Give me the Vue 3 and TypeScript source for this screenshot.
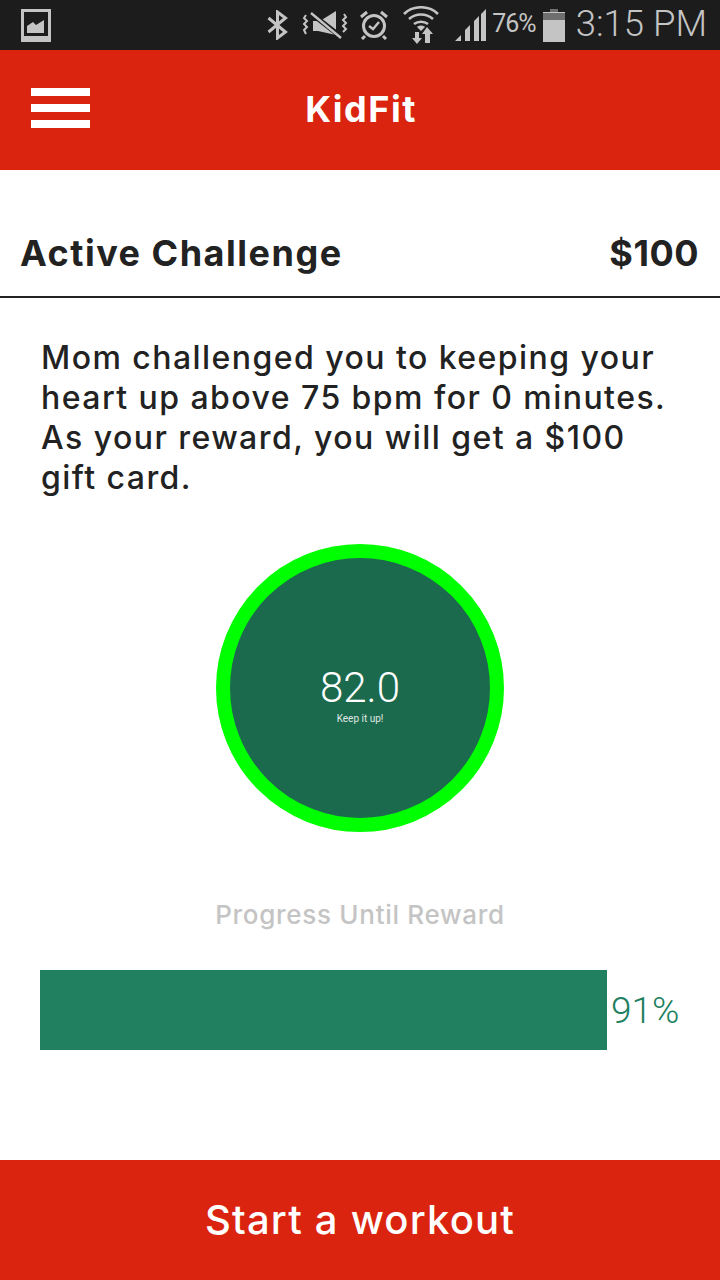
<template>
  <div class="screen">
    <div class="status-bar">
      <svg class="pic-icon" width="30" height="33" viewBox="0 0 30 33">
        <path fill="#c4c4c4" fill-rule="evenodd" d="M0 0h30v33H0z M3 3v24h24V3z" />
        <path fill="#c4c4c4" d="M6 24v-7l6-4 3 3 8-5v13z" />
      </svg>
      <div class="status-right">
        <svg class="st bt" width="21" height="30" viewBox="0 0 21 30">
          <path fill="none" stroke="#c4c4c4" stroke-width="3" d="M1.5 8l17 14-8 6V2l8 6-17 14" />
        </svg>
        <svg class="st mute" width="46" height="30" viewBox="0 0 46 30">
          <path fill="none" stroke="#c4c4c4" stroke-width="2" d="M4 5l-2 3 3 3-3 3 3 3-3 3 2 4" />
          <path fill="none" stroke="#c4c4c4" stroke-width="2" d="M42 4l2 3-3 3 3 3-3 3 3 3-3 3" />
          <path fill="#c4c4c4" d="M11 11h7L34 1v24l-18-4h-5z" />
          <path fill="none" stroke="#1c1c1c" stroke-width="5" d="M6 1l32 25" />
          <path fill="none" stroke="#c4c4c4" stroke-width="2.4" d="M9 3l30 25" />
        </svg>
        <svg class="st alarm" width="30" height="30" viewBox="0 0 30 30">
          <circle cx="15" cy="16" r="10.5" fill="none" stroke="#c4c4c4" stroke-width="3" />
          <path fill="none" stroke="#c4c4c4" stroke-width="2.4" d="M10 16l4 3 6-7" />
          <path fill="none" stroke="#c4c4c4" stroke-width="3" d="M2 7l6-5M28 7l-6-5M6 26l-3 3M24 26l3 3" />
        </svg>
        <svg class="st wifi" width="36" height="38" viewBox="0 0 36 38">
          <path fill="none" stroke="#c4c4c4" stroke-width="2.6" d="M1 8C10-1 26-1 35 8" />
          <path fill="none" stroke="#c4c4c4" stroke-width="2.6" d="M6 13c7-6 17-6 24 0" />
          <path fill="none" stroke="#c4c4c4" stroke-width="2.6" d="M11 18c4-3 10-3 14 0" />
          <path fill="#c4c4c4" d="M14 21c2-2 6-2 8 0l-4 4z" />
          <path fill="#c4c4c4" d="M12 26h4v6h3l-5 6-5-6h3zM24 21l6 7h-3v9h-5v-9h-3z" />
        </svg>
        <svg class="st signal" width="31" height="32" viewBox="0 0 31 32">
          <path fill="#c4c4c4" d="M0 32l6-6v6zM10 32V21l5-5v16zM19 32V12l5-5v25zM26 32V5l5-5v32z" />
        </svg>
        <span class="batt-text">76%</span>
        <svg class="st batt" width="22" height="33" viewBox="0 0 22 33">
          <path fill="#6e6e6e" d="M7 0h8v3h7v8H0V3h7z" />
          <path fill="#c4c4c4" d="M0 3h22v1H0zM0 11h22v22H0z" />
        </svg>
        <span class="clock">3:15 PM</span>
      </div>
    </div>

    <header class="app-bar">
      <div class="burger"><i></i><i></i><i></i></div>
      <span class="title">KidFit</span>
    </header>

    <main class="content">
      <div class="challenge-head">
        <span>Active Challenge</span>
        <span class="price">$100</span>
      </div>
      <p class="desc">
        Mom challenged you to keeping your heart up above 75 bpm for 0 minutes. As your reward, you will get a $100 gift card.
      </p>
      <div class="gauge">
        <div class="bpm">82.0</div>
        <div class="note">Keep it up!</div>
      </div>
      <div class="progress-label">Progress Until Reward</div>
      <div class="progress-row">
        <div class="bar" :style="{ width: barWidth + 'px' }"></div>
        <span class="pct">{{ progress }}%</span>
      </div>
    </main>

    <button class="start">Start a workout</button>
  </div>
</template>

<script setup lang="ts">
const progress = 91
const barWidth = 567
</script>

<style>
html, body { margin: 0; background: #fff; }
</style>

<style scoped>
.screen {
  width: 720px;
  height: 1280px;
  display: flex;
  flex-direction: column;
  font-family: "Inter", "Noto Sans", sans-serif;
  background: #fff;
  overflow: hidden;
}
.status-bar {
  height: 50px;
  flex: none;
  background: #1c1c1c;
  display: flex;
  align-items: center;
  justify-content: space-between;
  padding: 0 13px 0 21px;
  color: #c4c4c4;
  font-family: "Roboto", sans-serif;
}
.status-right { display: flex; align-items: center; }
.st { flex: none; }
.bt { margin-right: 14px; }
.mute { margin-right: 11px; }
.alarm { margin-right: 14px; }
.wifi { margin-right: 16px; }
.batt-text { font-size: 25px; margin: 0 7px 0 6px; letter-spacing: -1px; position: relative; top: -2px; }
.clock { font-size: 36.5px; font-weight: 300; margin-left: 11px; position: relative; top: -2px; }
.app-bar {
  height: 120px;
  box-sizing: border-box;
  padding: 0 0 2px 2px;
  flex: none;
  background: #da240f;
  display: flex;
  align-items: center;
  justify-content: center;
  position: relative;
}
.burger {
  position: absolute;
  left: 31px;
  top: 38px;
  width: 59px;
  display: flex;
  flex-direction: column;
  gap: 8px;
}
.burger i { display: block; height: 8px; background: #fff; }
.title { color: #fff; font-size: 36px; font-weight: 700; letter-spacing: 1.5px; }
.content { flex: 1; display: flex; flex-direction: column; }
.challenge-head {
  height: 128px;
  box-sizing: border-box;
  padding: 61px 21px 0 20px;
  border-bottom: 2px solid #222;
  display: flex;
  justify-content: space-between;
  font-size: 36px;
  line-height: 44px;
  font-weight: 700;
  letter-spacing: 1.5px;
  color: #222;
}
.price { letter-spacing: 0.5px; }
.desc {
  margin: 40px 40px 0 41px;
  font-size: 32px;
  line-height: 40px;
  font-weight: 500;
  letter-spacing: 1.45px;
  color: #222;
}
.gauge {
  width: 288px;
  height: 288px;
  box-sizing: border-box;
  margin: 46px auto 0;
  padding-top: 13px;
  border: 14px solid #00ff00;
  border-radius: 50%;
  background: #1c6a4e;
  color: #fff;
  display: flex;
  flex-direction: column;
  align-items: center;
  justify-content: center;
  font-family: "Roboto", sans-serif;
}
.bpm { font-size: 42px; font-weight: 300; line-height: 48px; }
.note { font-size: 10px; line-height: 12px; margin-top: 1px; opacity: 0.85; }
.progress-label {
  margin-top: 67px;
  text-align: center;
  font-size: 26px;
  font-weight: 500;
  letter-spacing: 0.7px;
  color: #c4c4c4;
}
.progress-row {
  display: flex;
  align-items: center;
  margin: 40px 0 0 40px;
}
.bar { height: 80px; background: #208060; }
.pct {
  margin-left: 4px;
  font-family: "Roboto", sans-serif;
  font-size: 37px;
  font-weight: 300;
  color: #208060;
}
.start {
  height: 120px;
  flex: none;
  border: none;
  padding-bottom: 3px;
  background: #da240f;
  color: #fff;
  font-family: inherit;
  font-size: 40px;
  font-weight: 500;
  letter-spacing: 1.2px;
}
</style>
